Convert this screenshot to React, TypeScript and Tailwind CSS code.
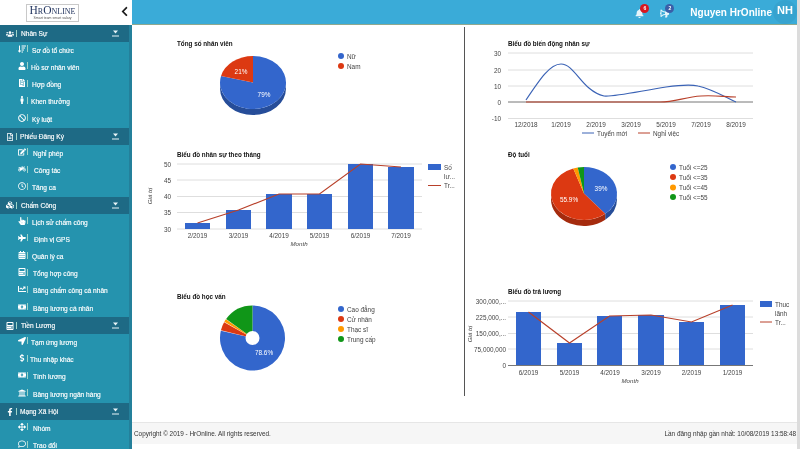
import type { ReactNode } from "react";
import type { IconType } from "react-icons";
import {
  FaUsers, FaSortAmountDown, FaUser, FaFileInvoice, FaMale, FaBan, FaRegFileAlt, FaEdit, FaMotorcycle, FaRegClock,
  FaCubes, FaHandPointer, FaPlane, FaCalendarAlt, FaCalculator, FaChartLine, FaMoneyBillAlt, FaLocationArrow,
  FaDollarSign, FaUniversity, FaFacebookF, FaArrowsAlt, FaRegComment, FaChevronLeft, FaBell, FaBullhorn,
} from "react-icons/fa";

type Item = { t: string; I: IconType; ml: number };
type Group = { t: string; I: IconType; ml: number; items: Item[] };

const groups: Group[] = [
  { t: "Nhân Sự", I: FaUsers, ml: 4, items: [
    { t: "Sơ đồ tổ chức", I: FaSortAmountDown, ml: 5 },
    { t: "Hồ sơ nhân viên", I: FaUser, ml: 4 },
    { t: "Hợp đồng", I: FaFileInvoice, ml: 5 },
    { t: "Khen thưởng", I: FaMale, ml: 4 },
    { t: "Kỷ luật", I: FaBan, ml: 5 },
  ] },
  { t: "Phiếu Đăng Ký", I: FaRegFileAlt, ml: 3, items: [
    { t: "Nghỉ phép", I: FaEdit, ml: 6 },
    { t: "Công tác", I: FaMotorcycle, ml: 7 },
    { t: "Tăng ca", I: FaRegClock, ml: 5 },
  ] },
  { t: "Chấm Công", I: FaCubes, ml: 4, items: [
    { t: "Lịch sử chấm công", I: FaHandPointer, ml: 5 },
    { t: "Định vị GPS", I: FaPlane, ml: 7 },
    { t: "Quản lý ca", I: FaCalendarAlt, ml: 5 },
    { t: "Tổng hợp công", I: FaCalculator, ml: 6 },
    { t: "Bảng chấm công cá nhân", I: FaChartLine, ml: 6 },
    { t: "Bảng lương cá nhân", I: FaMoneyBillAlt, ml: 6 },
  ] },
  { t: "Tiền Lương", I: FaCalculator, ml: 4, items: [
    { t: "Tạm ứng lương", I: FaLocationArrow, ml: 4 },
    { t: "Thu nhập khác", I: FaDollarSign, ml: 3 },
    { t: "Tính lương", I: FaMoneyBillAlt, ml: 6 },
    { t: "Bảng lương ngân hàng", I: FaUniversity, ml: 6 },
  ] },
  { t: "Mạng Xã Hội", I: FaFacebookF, ml: 3, items: [
    { t: "Nhóm", I: FaArrowsAlt, ml: 6 },
    { t: "Trao đổi", I: FaRegComment, ml: 6 },
  ] },
];

function Caret() {
  return (
    <svg width="7" height="7" viewBox="0 0 7 7" className="absolute left-[112px] top-[5px]">
      <polygon points="1,0.5 6,0.5 3.5,3.5" fill="#e8f4f7" />
      <rect x="0" y="5.5" width="7" height="1" fill="#e8f4f7" />
    </svg>
  );
}

function Sidebar() {
  return (
    <aside className="flex w-[132px] shrink-0 flex-col">
      <div className="relative flex h-[25px] shrink-0 items-center bg-white">
        <div className="ml-[26px] flex h-[18px] w-[53px] flex-col items-center justify-center border border-[#c9c9c9] leading-none text-[#23355f]">
          <span className="font-['Liberation_Serif',serif] text-[11.5px] leading-[9px] [font-variant:small-caps]">HrOnline</span>
          <span className="mt-[1px] text-[3.5px] leading-[4px] text-[#555]">Smart team smart salary</span>
        </div>
        <FaChevronLeft className="absolute left-[120px] top-[6px] h-[11px] w-[9px] text-[#1d1d1d]" />
      </div>
      <div className="flex-1 overflow-hidden bg-[#24809b] pr-[3px]">
        {groups.map((g) => (
          <div key={g.t}>
            <div className="relative flex h-[17.2px] items-center bg-[#1e6a85] pl-[6px] text-white">
              <span className="flex w-[8px] justify-center"><g.I className="h-[8px] w-[8px]" /></span>
              <span className="ml-[2px] h-[7px] w-px bg-[#9fd4c8]" />
              <span className="text-[6.6px] [-webkit-text-stroke:0.15px_#fff]" style={{ marginLeft: g.ml }}>{g.t}</span>
              <Caret />
            </div>
            <div className="bg-[#2593ae]">
              {g.items.map((it) => (
                <div key={it.t} className="flex h-[17.2px] items-center pl-[18px] text-white">
                  <span className="flex w-[8px] -translate-y-[2px] justify-center"><it.I className="h-[8px] w-[8px]" /></span>
                  <span className="ml-[1px] h-[7px] w-px -translate-y-[2px] bg-[#9fd4c8]" />
                  <span className="text-[6.6px] [-webkit-text-stroke:0.15px_#fff]" style={{ marginLeft: it.ml - 1 }}>{it.t}</span>
                </div>
              ))}
            </div>
          </div>
        ))}
      </div>
    </aside>
  );
}

function Badge({ n, cls }: { n: string; cls: string }) {
  return (
    <span className={`absolute left-[5px] -top-[5px] flex h-[9px] w-[9px] items-center justify-center rounded-full text-[5px] font-bold text-white ${cls}`}>{n}</span>
  );
}

function Topbar() {
  return (
    <header className="flex h-[25px] shrink-0 items-center justify-end border-b border-[#8fa88f] bg-[#3aabd8] text-white">
      <span className="relative mr-[16px] mt-[3px]"><FaBell className="h-[9px] w-[9px] text-[#e4f4fa]" /><Badge n="6" cls="bg-[#d9171f]" /></span>
      <span className="relative mr-[21px] mt-[3px]"><FaBullhorn className="h-[9px] w-[9px] -scale-x-100 text-[#e4f4fa]" /><Badge n="2" cls="bg-[#3a5ea8]" /></span>
      <span className="text-[10px] font-bold">Nguyen HrOnline</span>
      <span className="ml-[1px] flex h-[24px] w-[24px] items-start justify-center rounded-full bg-[#37a3cf] pt-[4px] text-[11px] leading-[13px] font-bold">NH</span>
    </header>
  );
}

const P = (cx: number, cy: number, rx: number, ry: number, deg: number) => {
  const a = (deg * Math.PI) / 180;
  return [cx + rx * Math.sin(a), cy - ry * Math.cos(a)];
};

function slicePath(cx: number, cy: number, rx: number, ry: number, a: number, b: number) {
  const [x1, y1] = P(cx, cy, rx, ry, a);
  const [x2, y2] = P(cx, cy, rx, ry, b);
  return `M${cx} ${cy}L${x1} ${y1}A${rx} ${ry} 0 ${b - a > 180 ? 1 : 0} 1 ${x2} ${y2}Z`;
}

function sidePath(cx: number, cy: number, rx: number, ry: number, d: number, a: number, b: number) {
  const [x1, y1] = P(cx, cy, rx, ry, a);
  const [x2, y2] = P(cx, cy, rx, ry, b);
  return `M${x1} ${y1}A${rx} ${ry} 0 0 1 ${x2} ${y2}L${x2} ${y2 + d}A${rx} ${ry} 0 0 0 ${x1} ${y1 + d}Z`;
}

type Slice = { a: number; b: number; c: string; dark?: string };

function Pie({ cx, cy, rx, ry, d = 0, slices }: { cx: number; cy: number; rx: number; ry: number; d?: number; slices: Slice[] }) {
  return (
    <g>
      {slices.map((s) => {
        const a = Math.max(s.a, 90);
        const b = Math.min(s.b, 270);
        return d > 0 && a < b ? <path key={`s${s.a}`} d={sidePath(cx, cy, rx, ry, d, a, b)} fill={s.dark} /> : null;
      })}
      {slices.map((s) => (
        <path key={s.a} d={slicePath(cx, cy, rx, ry, s.a, s.b)} fill={s.c} />
      ))}
    </g>
  );
}

function T({ x, y, children, size = 6.4, fill = "#444", anchor = "start", weight, italic }: {
  x: number; y: number; children: ReactNode; size?: number; fill?: string; anchor?: "start" | "middle" | "end"; weight?: number; italic?: boolean;
}) {
  return (
    <text x={x} y={y} fontSize={size} fill={fill} textAnchor={anchor} fontWeight={weight} fontStyle={italic ? "italic" : undefined} dominantBaseline="central">
      {children}
    </text>
  );
}

const Title = ({ x, y, children }: { x: number; y: number; children: ReactNode }) => (
  <T x={x} y={y} size={6.3} fill="#111" weight={700}>{children}</T>
);

function Legend({ x, items }: { x: number; items: { y: number; t: string; c: string }[] }) {
  return (
    <g>
      {items.map((l) => (
        <g key={l.t}>
          <circle cx={x} cy={l.y} r={3} fill={l.c} />
          <T x={x + 6} y={l.y}>{l.t}</T>
        </g>
      ))}
    </g>
  );
}

const BLUE = "#3366cc";
const RED = "#dc3912";
const ORANGE = "#ff9900";
const GREEN = "#109618";
const LINE = "#b8402a";
const GRID = "#dedede";

function Chart({ vb, h, children }: { vb: string; h: number; children: ReactNode }) {
  return (
    <svg viewBox={vb} className="block w-full shrink-0" style={{ height: h }}>{children}</svg>
  );
}

function Bars({ bars, base }: { bars: [number, number, number][]; base: number }) {
  return (
    <g>
      {bars.map(([x1, x2, top]) => (
        <rect key={x1} x={x1} y={top} width={x2 - x1} height={base - top} fill={BLUE} />
      ))}
      <polyline fill="none" stroke={LINE} strokeWidth={1.2} points={bars.map(([x1, x2, top]) => `${(x1 + x2) / 2},${top}`).join(" ")} />
    </g>
  );
}

function LeftColumn() {
  return (
    <div className="flex h-[369px] w-[332px] shrink-0 flex-col border-r border-[#555]">
      <Chart vb="133 28 331 122" h={122}>
        <Title x={177} y={44}>Tổng số nhân viên</Title>
        <Pie cx={253} cy={83.5} rx={33} ry={26.5} d={6} slices={[
          { a: 0, b: 284.4, c: BLUE, dark: "#264d99" },
          { a: 284.4, b: 360, c: RED, dark: "#a52b0e" },
        ]} />
        <T x={241} y={72.5} fill="#fff" anchor="middle">21%</T>
        <T x={264} y={95} fill="#fff" anchor="middle">79%</T>
        <Legend x={341} items={[{ y: 57, t: "Nữ", c: BLUE }, { y: 67, t: "Nam", c: RED }]} />
      </Chart>
      <Chart vb="133 150 331 120" h={120}>
        <Title x={177} y={155}>Biểu đồ nhân sự theo tháng</Title>
        {[[165, "50"], [181, "45"], [197.5, "40"], [213.5, "35"], [230, "30"]].map(([y, l]) => (
          <g key={l}>
            <line x1={177} x2={422} y1={y} y2={y} stroke={GRID} />
            <T x={171} y={y as number} anchor="end">{l}</T>
          </g>
        ))}
        <Bars base={230} bars={[[185, 210, 224], [226, 251, 211], [266, 292, 195], [307, 332, 195], [348, 373, 165], [388, 414, 168]]} />
        {[[197.5, "2/2019"], [238.5, "3/2019"], [279, "4/2019"], [319.5, "5/2019"], [360.5, "6/2019"], [401, "7/2019"]].map(([x, l]) => (
          <T key={l} x={x as number} y={236} anchor="middle">{l}</T>
        ))}
        <T x={299} y={244.5} anchor="middle" size={6.2} italic>Month</T>
        <g transform="rotate(-90 149 197)"><T x={149} y={197} anchor="middle" size={6.2} italic>Giá trị</T></g>
        <rect x={428} y={165} width={13} height={6} fill={BLUE} />
        <T x={444} y={168}>Số</T>
        <T x={444} y={177}>lư...</T>
        <line x1={428} x2={441} y1={186.5} y2={186.5} stroke={LINE} />
        <T x={444} y={186.5}>Tr...</T>
      </Chart>
      <Chart vb="133 270 331 127" h={127}>
        <Title x={177} y={297}>Biểu đồ học vấn</Title>
        <Pie cx={252.5} cy={339} rx={32.5} ry={32.5} slices={[
          { a: 0, b: 283, c: BLUE },
          { a: 283.8, b: 299, c: RED },
          { a: 299.8, b: 305, c: ORANGE },
          { a: 305.8, b: 360, c: GREEN },
        ]} />
        <circle cx={252.5} cy={339} r={7} fill="#fff" />
        <T x={264} y={353.5} fill="#fff" anchor="middle">78.6%</T>
        <Legend x={341} items={[
          { y: 310, t: "Cao đẳng", c: BLUE },
          { y: 320, t: "Cử nhân", c: RED },
          { y: 330, t: "Thạc sĩ", c: ORANGE },
          { y: 340, t: "Trung cấp", c: GREEN },
        ]} />
      </Chart>
    </div>
  );
}

function RightColumn() {
  return (
    <div className="flex h-[369px] w-[333px] shrink-0 flex-col">
      <Chart vb="465 28 333 117" h={117}>
        <Title x={508} y={44}>Biểu đồ biến động nhân sự</Title>
        {[[54, "30"], [71, "20"], [87, "10"], [119.5, "-10"]].map(([y, l]) => (
          <g key={l}>
            <line x1={508} x2={753} y1={y} y2={y} stroke={GRID} />
            <T x={501} y={y as number} anchor="end">{l}</T>
          </g>
        ))}
        <line x1={508} x2={753} y1={103} y2={103} stroke="#777" />
        <T x={501} y={103} anchor="end">0</T>
        <path d="M526 101C540 80 550 65 561 65C575 65 582 92 604 97C615 98 640 92 666 88C680 86 690 85 698 87C712 90 725 98 736 103" fill="none" stroke="#3a62b5" strokeWidth={1.2} />
        <path d="M526 103L660 103C675 103 685 98 701 97C715 96 725 98 736 98" fill="none" stroke={LINE} strokeWidth={1.2} />
        {[[526, "12/2018"], [561, "1/2019"], [596, "2/2019"], [631, "3/2019"], [666, "5/2019"], [701, "7/2019"], [736, "8/2019"]].map(([x, l]) => (
          <T key={l} x={x as number} y={125} anchor="middle">{l}</T>
        ))}
        <line x1={582} x2={594} y1={134} y2={134} stroke="#3a62b5" />
        <T x={597} y={134}>Tuyển mới</T>
        <line x1={638} x2={650} y1={134} y2={134} stroke={LINE} />
        <T x={653} y={134}>Nghỉ việc</T>
      </Chart>
      <Chart vb="465 145 333 135" h={135}>
        <Title x={508} y={155}>Độ tuổi</Title>
        <Pie cx={584} cy={194.5} rx={33} ry={26.5} d={6} slices={[
          { a: 0, b: 140, c: BLUE, dark: "#264d99" },
          { a: 140, b: 341, c: RED, dark: "#a52b0e" },
          { a: 341, b: 349, c: ORANGE, dark: "#b56d00" },
          { a: 349, b: 360, c: GREEN, dark: "#0b6c11" },
        ]} />
        <T x={601} y={189} fill="#fff" anchor="middle">39%</T>
        <T x={569} y={200} fill="#fff" anchor="middle">55.9%</T>
        <Legend x={673} items={[
          { y: 168, t: "Tuổi <=25", c: BLUE },
          { y: 178, t: "Tuổi <=35", c: RED },
          { y: 188.5, t: "Tuổi <=45", c: ORANGE },
          { y: 198, t: "Tuổi <=55", c: GREEN },
        ]} />
      </Chart>
      <Chart vb="465 280 333 117" h={117}>
        <Title x={508} y={292}>Biểu đồ trả lương</Title>
        {[[302, "300,000,..."], [318, "225,000,..."], [334.5, "150,000,..."], [350, "75,000,000"]].map(([y, l]) => (
          <g key={l}>
            <line x1={508} x2={753} y1={y} y2={y} stroke={GRID} />
            <T x={506} y={y as number} anchor="end">{l}</T>
          </g>
        ))}
        <T x={506} y={366.5} anchor="end">0</T>
        <Bars base={366.5} bars={[[516, 541, 313], [557, 582, 344], [597, 622, 317], [638, 664, 316], [679, 704, 323], [720, 745, 306]]} />
        <line x1={508} x2={753} y1={366.5} y2={366.5} stroke="#777" />
        {[[528.5, "6/2019"], [569.5, "5/2019"], [610, "4/2019"], [651, "3/2019"], [691.5, "2/2019"], [732.5, "1/2019"]].map(([x, l]) => (
          <T key={l} x={x as number} y={373} anchor="middle">{l}</T>
        ))}
        <T x={630} y={381.5} anchor="middle" size={6.2} italic>Month</T>
        <g transform="rotate(-90 469 335)"><T x={469} y={335} anchor="middle" size={6.2} italic>Giá trị</T></g>
        <rect x={760} y={302} width={12} height={6} fill={BLUE} />
        <T x={775} y={305}>Thuc</T>
        <T x={775} y={314}>lãnh</T>
        <line x1={760} x2={772} y1={323} y2={323} stroke={LINE} />
        <T x={775} y={323}>Tr...</T>
      </Chart>
    </div>
  );
}

export default function App() {
  return (
    <div className="flex h-[449px] w-[800px] overflow-hidden bg-white font-['Liberation_Sans',Arial,sans-serif] blur-[0.3px]">
      <Sidebar />
      <main className="flex w-[665px] shrink-0 flex-col">
        <Topbar />
        <div className="h-[397px] shrink-0 pt-[2px] pl-[1px]">
          <div className="flex"><LeftColumn /><RightColumn /></div>
        </div>
        <footer className="flex h-[22px] shrink-0 items-center justify-between border-t border-[#e6e6e6] bg-[#f6f6f6] pl-[2px] pr-[1px] text-[6.4px] text-[#333]">
          <span>Copyright © 2019 - HrOnline. All rights reserved.</span>
          <span>Lần đăng nhập gần nhất: 10/08/2019 13:58:48</span>
        </footer>
      </main>
      <div className="w-[3px] shrink-0 bg-[#dcdcdc]" />
    </div>
  );
}
